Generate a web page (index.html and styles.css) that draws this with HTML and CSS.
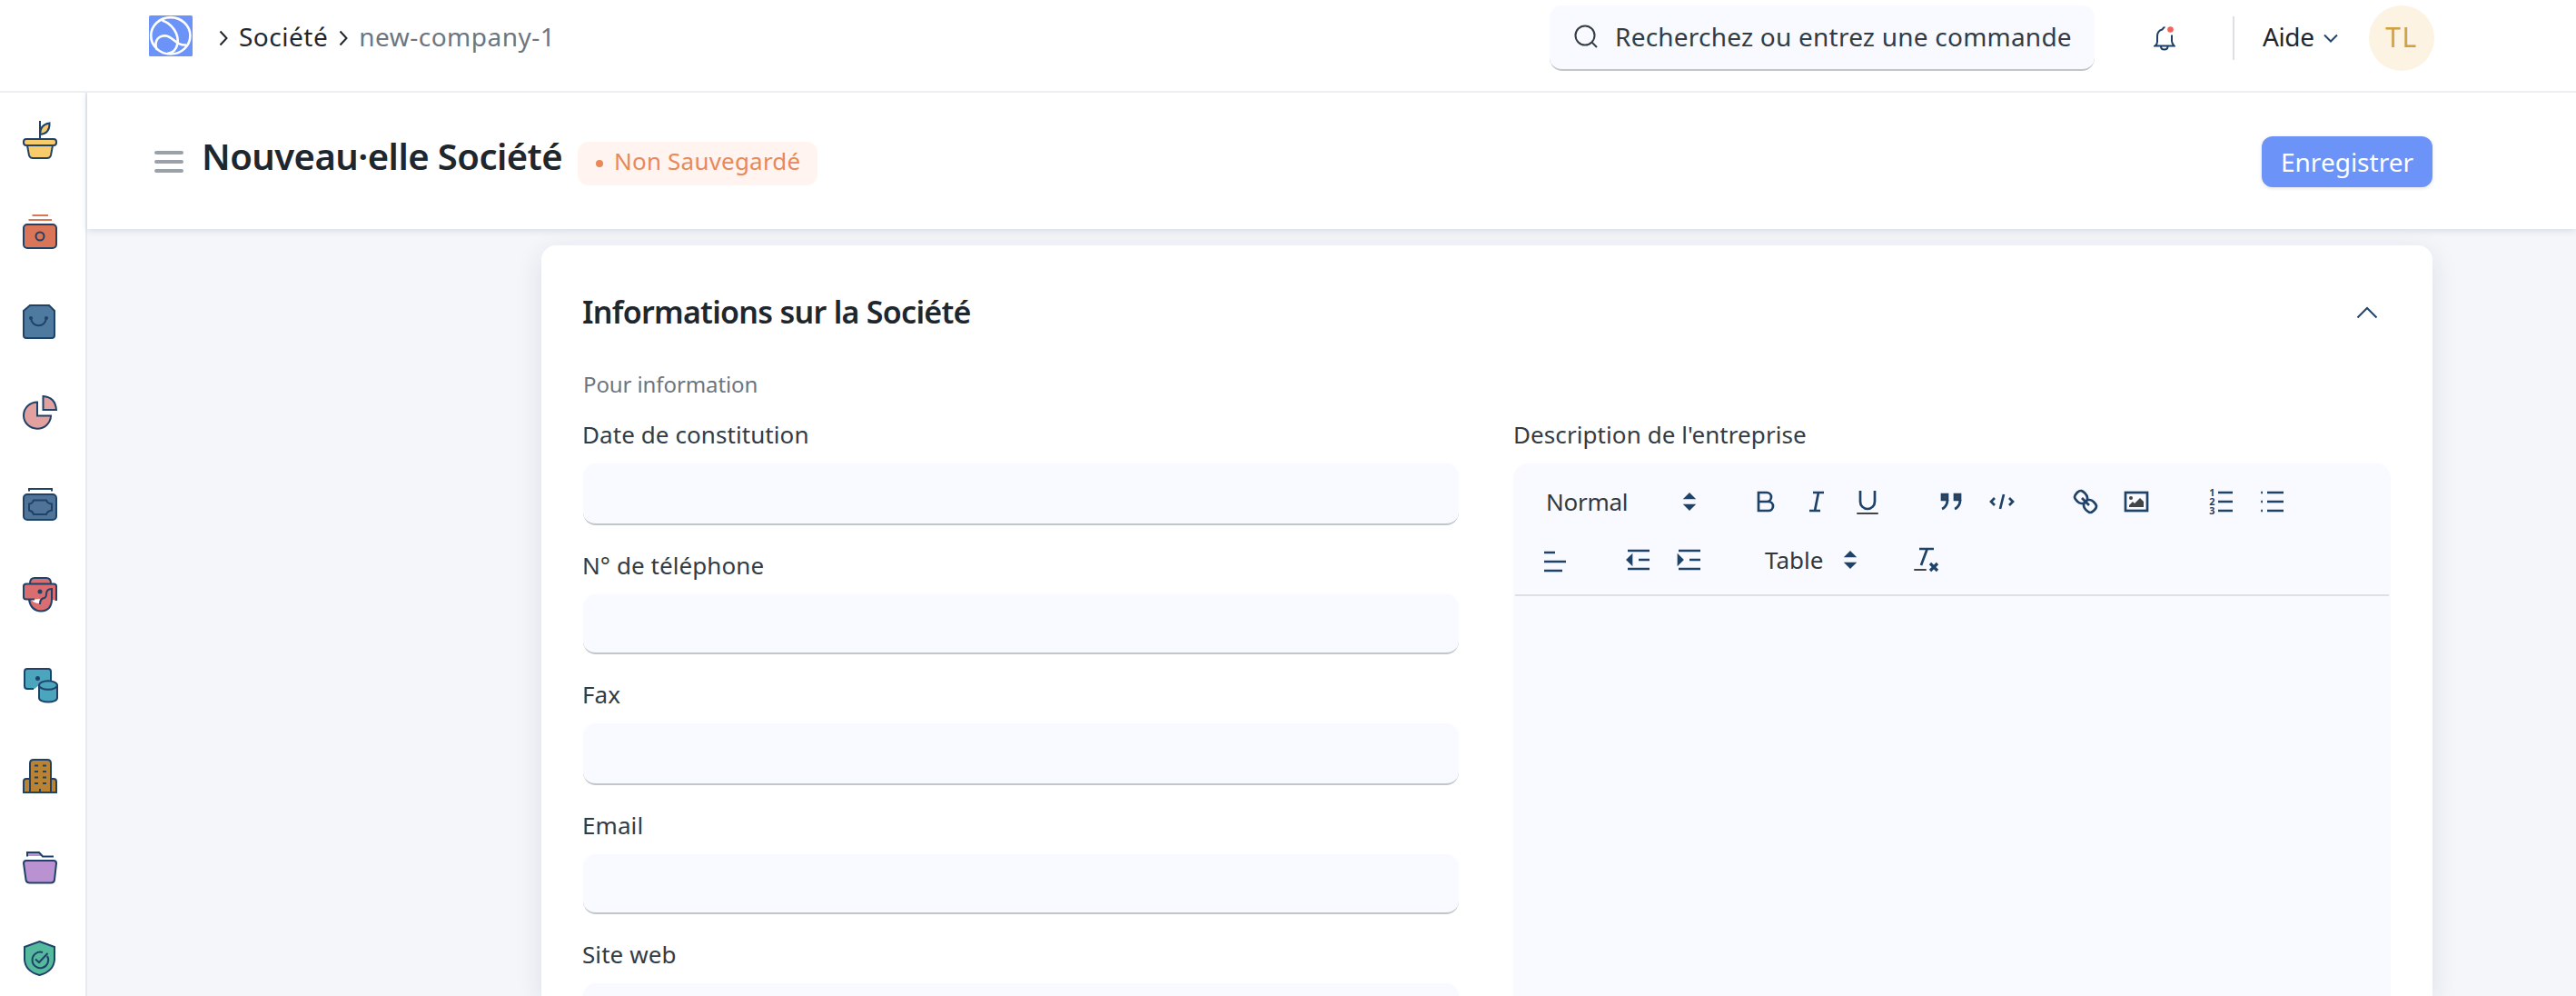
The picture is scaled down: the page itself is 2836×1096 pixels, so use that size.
FILE: index.html
```html
<!DOCTYPE html>
<html lang="fr">
<head>
<meta charset="utf-8">
<title>Nouveau·elle Société</title>
<link rel="stylesheet" href="styles.css">
</head>
<body>
<header class="navbar">
  <svg class="logo" width="48" height="45" viewBox="0 0 48 45"><rect width="48" height="45" rx="1.5" fill="#6c94f8"/><g fill="none" stroke="#fff" stroke-width="2.6"><ellipse cx="23.8" cy="22.3" rx="21.6" ry="20.2"/><path d="M14.500 5.500C26 9 33 21 31.500 31C30 38 26 41.500 20 42"/><path d="M9 38C5 30 9 22.800 17 22.300C27 22.500 29 33.500 41 32.500"/></g></svg>
  <nav class="crumbs">
    <svg width="10" height="18" viewBox="0 0 10 18"><path d="M1.500 1.500L8.500 9L1.500 16.500"/></svg>
    <span class="crumb">Société</span>
    <svg width="10" height="18" viewBox="0 0 10 18"><path d="M1.500 1.500L8.500 9L1.500 16.500"/></svg>
    <span class="crumb current">new-company-1</span>
  </nav>
  <div class="search">
    <svg width="26" height="26" viewBox="0 0 26 26"><circle cx="12" cy="12" r="10.500"/><path d="M19.500 19.500L25 25"/></svg>
    <span>Recherchez ou entrez une commande</span>
  </div>
  <svg class="bell" width="24" height="28" viewBox="0 0 24 28"><path d="M12.500 2C10.500 2 10 3.500 9.500 4.500C5.500 5.500 4 8.500 4 12V18C4 20 3 21.500 1.500 22.500H22.500C21 21 20 20 20 17V10.500M8 23C8 25.500 9.500 26.500 11.800 26.500S15.500 25.500 15.500 23"/><circle cx="18.500" cy="4.500" r="3.300"/></svg>
  <i class="divider"></i>
  <span class="help">Aide</span>
  <svg class="caret" width="16" height="10" viewBox="0 0 16 10"><path d="M1 1.500L8 8.500L15 1.500"/></svg>
  <span class="avatar">TL</span>
</header>
<div class="shell">
  <aside class="sidebar">
    <svg viewBox="0 0 38 42"><g fill="#f8cb6c"><path d="M5 27L7 38Q8 41 11 41H27Q30 41 31 38L33 27Z"/><rect x="1" y="20" width="36" height="7" rx="3"/><path d="M19 15Q19 4 29.500 2.500Q30 14 19 15Z"/></g><path d="M19 0V20"/></svg>
    <svg viewBox="0 0 38 38"><path class="coral-line" d="M10.500 1H28M6.500 6H32"/><rect x="1" y="11" width="36" height="26" rx="4" fill="#db7557"/><circle cx="19" cy="24" r="4.500"/></svg>
    <svg class="bag" viewBox="0 0 38 38"><path fill="#4f7a9f" d="M1 7L8 1H29L35 7V34Q35 37 32 37H4Q1 37 1 34Z"/><path d="M9 15C10 26 25 26 26 15"/><circle class="dot" cx="9" cy="15" r="2"/><circle class="dot" cx="26" cy="15" r="2"/></svg>
    <svg viewBox="0 0 38 38"><g fill="#e2a09f"><path d="M16 7.500V22.500H31A15 14.600 0 1 1 16 7.500Z"/><path d="M22.500 1Q36 2 37 16H22.500Z"/></g></svg>
    <svg viewBox="0 0 38 38"><path d="M7 5.500V3H32V5.500"/><rect x="1" y="9" width="36" height="28" rx="4" fill="#4f7498"/><path d="M12 15.500H26Q27 19 32 19.500V26.500Q27 27.500 26 31H12Q11 27.500 7 26.500V19.500Q11 19 12 15.500Z"/></svg>
    <svg viewBox="0 0 38 38"><path fill="#d96d70" stroke="none" d="M8 7Q8 1 13 1H26Q31 1 31 7H34Q37 7 37 10V26L33 25Q32 37 20 37.500Q8 36 7 25H4Q1 25 1 22V10Q1 7 4 7Z"/><path fill="#fff" stroke="none" d="M9 25L19 24L18 29Q13 29 9 25Z"/><path d="M8 7Q8 1 13 1H26Q31 1 31 7M37 26V10Q37 7.500 34 7.500H4Q1 7.500 1 10V22Q1 24.500 4 24.500H13M7 25Q9 37 20 37.500Q32 37 32 24V13Q26 13 26 19Q26 23 22 23.500Q19 25 19 30"/><circle class="dot" cx="19" cy="16" r="2.500"/></svg>
    <svg viewBox="0 0 38 38"><path fill="#4ba5bd" stroke="none" d="M5 1H28Q31 1 31 4V16L18 19L13 23H5Q2 23 2 20V4Q2 1 5 1Z"/><path d="M31 14V4Q31 1 28 1H5Q2 1 2 4V20Q2 23 5 23H12"/><circle class="dot" cx="16.500" cy="11.500" r="2.500"/><path fill="#4ba5bd" d="M18 19V33C18 39 38 39 38 33V19"/><ellipse cx="28" cy="19" rx="10" ry="4.800" fill="#4ba5bd"/></svg>
    <svg viewBox="0 0 38 38"><path fill="#b98333" d="M1 37V25Q1 22 4 22H34Q37 22 37 25V37Z"/><path fill="#b98333" d="M8 37V5Q8 1 12 1H27Q31 1 31 5V37ZM19 37V33"/><path d="M13 7.500H17M13 14H17M13 20.500H17M13 27H17M22 7.500H26M22 14H26M22 20.500H26M22 27H26"/></svg>
    <svg viewBox="0 0 38 38"><path fill="#ba91d1" stroke="none" d="M5 7V3H18L22 7Z"/><path d="M5 7.500V3H18L22 7.500H34"/><path fill="#ba91d1" d="M4 12H34Q37 12 37 15L35 33Q34.500 36.500 31 36.500H8Q4 36.500 3.500 33L1 15Q1 12 4 12Z"/></svg>
    <svg viewBox="0 0 38 38"><path fill="#55b99d" d="M18.500 1L35 7V21Q34 34 18.500 38Q3 34 2 21V7Z"/><path d="M27 17A8.800 8.800 0 1 1 22 13M14 20.500L18 24L27.500 14"/></svg>
  </aside>
  <main class="page">
    <div class="page-head">
      <svg class="burger" width="32" height="24" viewBox="0 0 32 24"><path d="M2 2H30M2 12H30M2 22H30"/></svg>
      <h1>Nouveau·elle Société</h1>
      <span class="badge"><i></i>Non Sauvegardé</span>
      <button class="save">Enregistrer</button>
    </div>
    <section class="card">
      <div class="card-head">
        <h2>Informations sur la Société</h2>
        <svg class="caret" width="24" height="14" viewBox="0 0 24 14"><path d="M1.500 12.500L12 2L22.500 12.500"/></svg>
      </div>
      <p class="hint">Pour information</p>
      <div class="columns">
        <div class="fields">
          <label>Date de constitution</label><div class="input tall"></div>
          <label>N° de téléphone</label><div class="input"></div>
          <label>Fax</label><div class="input tall"></div>
          <label>Email</label><div class="input"></div>
          <label>Site web</label><div class="input tall"></div>
        </div>
        <div class="description">
          <label>Description de l'entreprise</label>
          <div class="editor">
            <div class="toolbar">
              <div class="tools row-one">
                <span class="picker format">Normal<svg viewBox="0 0 18 18"><path class="fill" d="M7 11L9 13L11 11ZM7 7L9 5L11 7Z"/></svg></span>
                <span class="group">
                  <svg viewBox="0 0 18 18"><path d="M5 4H9.500A2.500 2.500 0 0 1 9.500 9H5ZM5 9H10.500A2.500 2.500 0 0 1 10.500 14H5Z"/></svg>
                  <svg viewBox="0 0 18 18"><path d="M7 4H13M5 14H11M8 14L10 4"/></svg>
                  <svg viewBox="0 0 18 18"><path d="M5 3V9A4 4 0 0 0 13 9V3"/><rect class="even" x="3" y="15" width="12" height="1" rx=".5"/></svg>
                </span>
                <span class="group">
                  <svg viewBox="0 0 18 18"><path class="quote" d="M4 5H7V8H4ZM11 5H14V8H11Z"/><path d="M7 8C7 12 4 13 4 13M14 8C14 12 11 13 11 13"/></svg>
                  <svg viewBox="0 0 18 18"><path d="M5 7L3 9L5 11M13 7L15 9L13 11M10 5L8 13"/></svg>
                </span>
                <span class="group">
                  <svg viewBox="0 0 18 18"><path d="M7 7L11 11M8.900 4.577a3.476 3.476 0 0 1 .36 4.679A3.476 3.476 0 0 1 4.577 8.900C3.185 7.500 2.035 6.400 4.217 4.217S7.500 3.185 8.900 4.577ZM13.423 9.100a3.476 3.476 0 0 0-4.679-.36 3.476 3.476 0 0 0 .36 4.679c1.392 1.392 2.500 2.542 4.679.36S14.815 10.500 13.423 9.100Z"/></svg>
                  <svg viewBox="0 0 18 18"><rect x="3" y="4" width="12" height="10"/><circle class="even" cx="6" cy="7" r="1"/><path class="even" d="M5 12V11L7 9L8 10L11 7L13 9V12Z"/></svg>
                </span>
                <span class="group">
                  <svg viewBox="0 0 18 18"><path d="M7 4H15M7 9H15M7 14H15"/><text class="even" x="2.100" y="6">1</text><text x="2.100" y="11">2</text><text x="2.100" y="16">3</text></svg>
                  <svg viewBox="0 0 18 18"><path d="M6 4H15M6 9H15M6 14H15M2.600 4H3.500M2.600 9H3.500M2.600 14H3.500"/></svg>
                </span>
              </div>
              <div class="tools row-two">
                <svg class="align" viewBox="0 0 18 18"><path d="M3 5H9M3 10H15M3 15H13"/></svg>
                <span class="group">
                  <svg viewBox="0 0 18 18"><path d="M3 4H15M3 14H15M9 9H15"/><path class="fill" d="M5 7V11L3 9Z"/></svg>
                  <svg viewBox="0 0 18 18"><path d="M3 4H15M3 14H15M9 9H15"/><path class="fill" d="M3 7V11L5 9Z"/></svg>
                </span>
                <span class="picker table">Table<svg viewBox="0 0 18 18"><path class="fill" d="M7 11L9 13L11 11ZM7 7L9 5L11 7Z"/></svg></span>
                <svg viewBox="0 0 18 18"><path d="M5 3H13M9.350 3L6 12"/><path class="cross" d="M11 11L15 15M15 11L11 15"/><rect class="even" x="2" y="14" width="7" height="1" rx=".5"/></svg>
              </div>
            </div>
          </div>
        </div>
      </div>
    </section>
  </main>
</div>
</body>
</html>
```
FILE: styles.css
```css
* { box-sizing: border-box; }
body {
  margin: 0;
  height: 1096px;
  overflow: hidden;
  display: flex;
  flex-direction: column;
  background: #fff;
  color: #1f272e;
  font: 28px/36px "Noto Sans", sans-serif;
}
svg { display: block; flex: none; }
h1, h2, p { margin: 0; }

.navbar {
  flex: none;
  height: 102px;
  padding: 6px 156px 22px 164px;
  display: flex;
  align-items: center;
  border-bottom: 2px solid #ebeff4;
}
.logo { margin-bottom: 5px; }
.crumbs { display: flex; align-items: center; margin-left: 29px; }
.crumbs svg { fill: none; stroke: #1f272e; stroke-width: 2; }
.crumb { margin: 0 12px; padding-bottom: 5px; letter-spacing: .5px; }
.crumb.current { color: #6c7680; letter-spacing: .5px; }
.search {
  width: 600px;
  height: 72px;
  margin-left: auto;
  padding: 0 0 2px 27px;
  display: flex;
  align-items: center;
  background: #f8faff;
  border-bottom: 2px solid #c0c6cc;
  border-radius: 14px;
  color: #333c44;
}
.search svg { fill: none; stroke: #333c44; stroke-width: 2; margin-right: 19px; }
.search span { letter-spacing: .22px; }
.bell { fill: none; stroke: #1d3f66; stroke-width: 2; margin-left: 65px; }
.bell circle { fill: #f2635c; stroke: none; }
.divider { width: 2px; height: 48px; margin: 0 31px 0 63px; background: #dcdfe4; }
.help { padding-bottom: 4px; width: 59px; letter-spacing: -.4px; }
.caret { fill: none; stroke: #234468; stroke-width: 2; }
.help + .caret { margin-left: 8px; }
.avatar {
  width: 72px;
  height: 72px;
  margin-left: 34px;
  border-radius: 50%;
  background: #fdf3e2;
  color: #d3a040;
  font-size: 30px;
  line-height: 70px;
  letter-spacing: 1.5px;
  text-align: center;
}

.shell { flex: 1; min-height: 0; display: flex; overflow: hidden; }
.sidebar {
  flex: none;
  width: 96px;
  padding: 31px 0 0 25px;
  border-right: 2px solid #e7ebf1;
  display: flex;
  flex-direction: column;
  gap: 62px;
}
.sidebar svg { width: 38px; height: 38px; fill: none; stroke: #1f4268; stroke-width: 2; overflow: visible; }
.sidebar svg:first-child { height: 42px; margin-bottom: -1px; }
.sidebar .bag { margin-top: -1px; }
.sidebar .coral-line { stroke: #db7557; }
.sidebar .dot { fill: #1f4268; stroke: none; }

.page { flex: 1; min-width: 0; background: #f4f6fa; display: flex; flex-direction: column; }
.page-head {
  flex: none;
  height: 150px;
  padding: 2px 158px 0 74px;
  display: flex;
  align-items: center;
  background: #fff;
  box-shadow: 0 2px 8px rgba(25, 39, 52, .12);
  position: relative;
}
.burger { stroke: #9aa1a9; stroke-width: 4; stroke-linecap: round; }
h1 { margin-left: 20px; padding-bottom: 12px; width: 414px; white-space: nowrap; font-size: 40px; line-height: 50px; font-weight: 600; letter-spacing: -.55px; }
.badge {
  width: 264px;
  height: 48px;
  margin-top: 4px;
  padding: 0 0 6px 20px;
  display: flex;
  align-items: center;
  border-radius: 12px;
  background: #fff4f0;
  color: #e98858;
  font-size: 26px;
  letter-spacing: .2px;
  white-space: nowrap;
}
.badge i { width: 8px; height: 8px; margin: 6px 12px 0 0; border-radius: 50%; background: #e98858; }
.save {
  width: 188px;
  height: 56px;
  margin-left: auto;
  padding: 0;
  border: 0;
  border-radius: 12px;
  background: #6c94f8;
  color: #fff;
  font: inherit;
  box-shadow: 0 1px 4px rgba(0, 0, 0, .12);
}

.card {
  flex: 1;
  min-height: 0;
  overflow: hidden;
  margin: 18px 158px 0 500px;
  padding: 46px 46px 0;
  border-radius: 16px 16px 0 0;
  background: #fff;
  box-shadow: 0 8px 30px rgba(25, 39, 52, .11);
}
.card-head { display: flex; justify-content: space-between; align-items: center; height: 50px; }
.card-head .caret { margin: 5px 14px 0 0; }
h2 { margin: 3px 0 0 -1px; font-size: 34px; line-height: 50px; font-weight: 600; letter-spacing: -.72px; }
.hint { margin-top: 41px; font-size: 24px; line-height: 32px; color: #6c7680; letter-spacing: -.1px; }
.columns { display: flex; gap: 60px; margin-top: 22px; }
.columns > div { flex: none; }
.fields { width: 964px; }
label { display: block; font-size: 26px; line-height: 34px; margin-bottom: 15px; color: #333c44; letter-spacing: .08px; }
.fields label { text-indent: -1px; }
.input {
  height: 66px;
  margin-bottom: 27px;
  border-radius: 14px;
  border-bottom: 2px solid #c0c6cc;
  background: #f8faff;
}
.input.tall { height: 68px; }
.description { width: 966px; }
.editor { height: 700px; background: #f8faff; border-radius: 16px; padding: 0 2px; }
.toolbar { height: 146px; padding-top: 24px; border-bottom: 2px solid #dcdfe4; }
.tools { display: flex; align-items: center; height: 36px; }
.tools svg { width: 36px; height: 36px; fill: none; stroke: #1f4268; stroke-width: 1.35; }
.tools .even { fill: #444; stroke: none; }
.tools .fill { fill: #1f4268; }
.tools .quote { fill: #444; }
.tools .cross { stroke-width: 1.6; }
.tools text { font: bold 5.400px "Noto Sans", sans-serif; fill: #1f4268; stroke: none; }
.group { display: flex; gap: 20px; }
.picker { display: flex; align-items: center; justify-content: space-between; font-size: 26px; line-height: 34px; color: #33383e; padding-bottom: 1px; }
.row-one { padding-left: 34px; }
.row-one .format { width: 176px; margin-right: 48px; letter-spacing: -.25px; }
.row-one .group { margin-right: 56px; }
.row-one .group:nth-child(4) { margin-right: 58px; }
.row-two { margin-top: 28px; padding-left: 26px; }
.row-two .align { margin-right: 56px; }
.row-two .table { width: 112px; margin: 0 48px 0 65px; }
```
